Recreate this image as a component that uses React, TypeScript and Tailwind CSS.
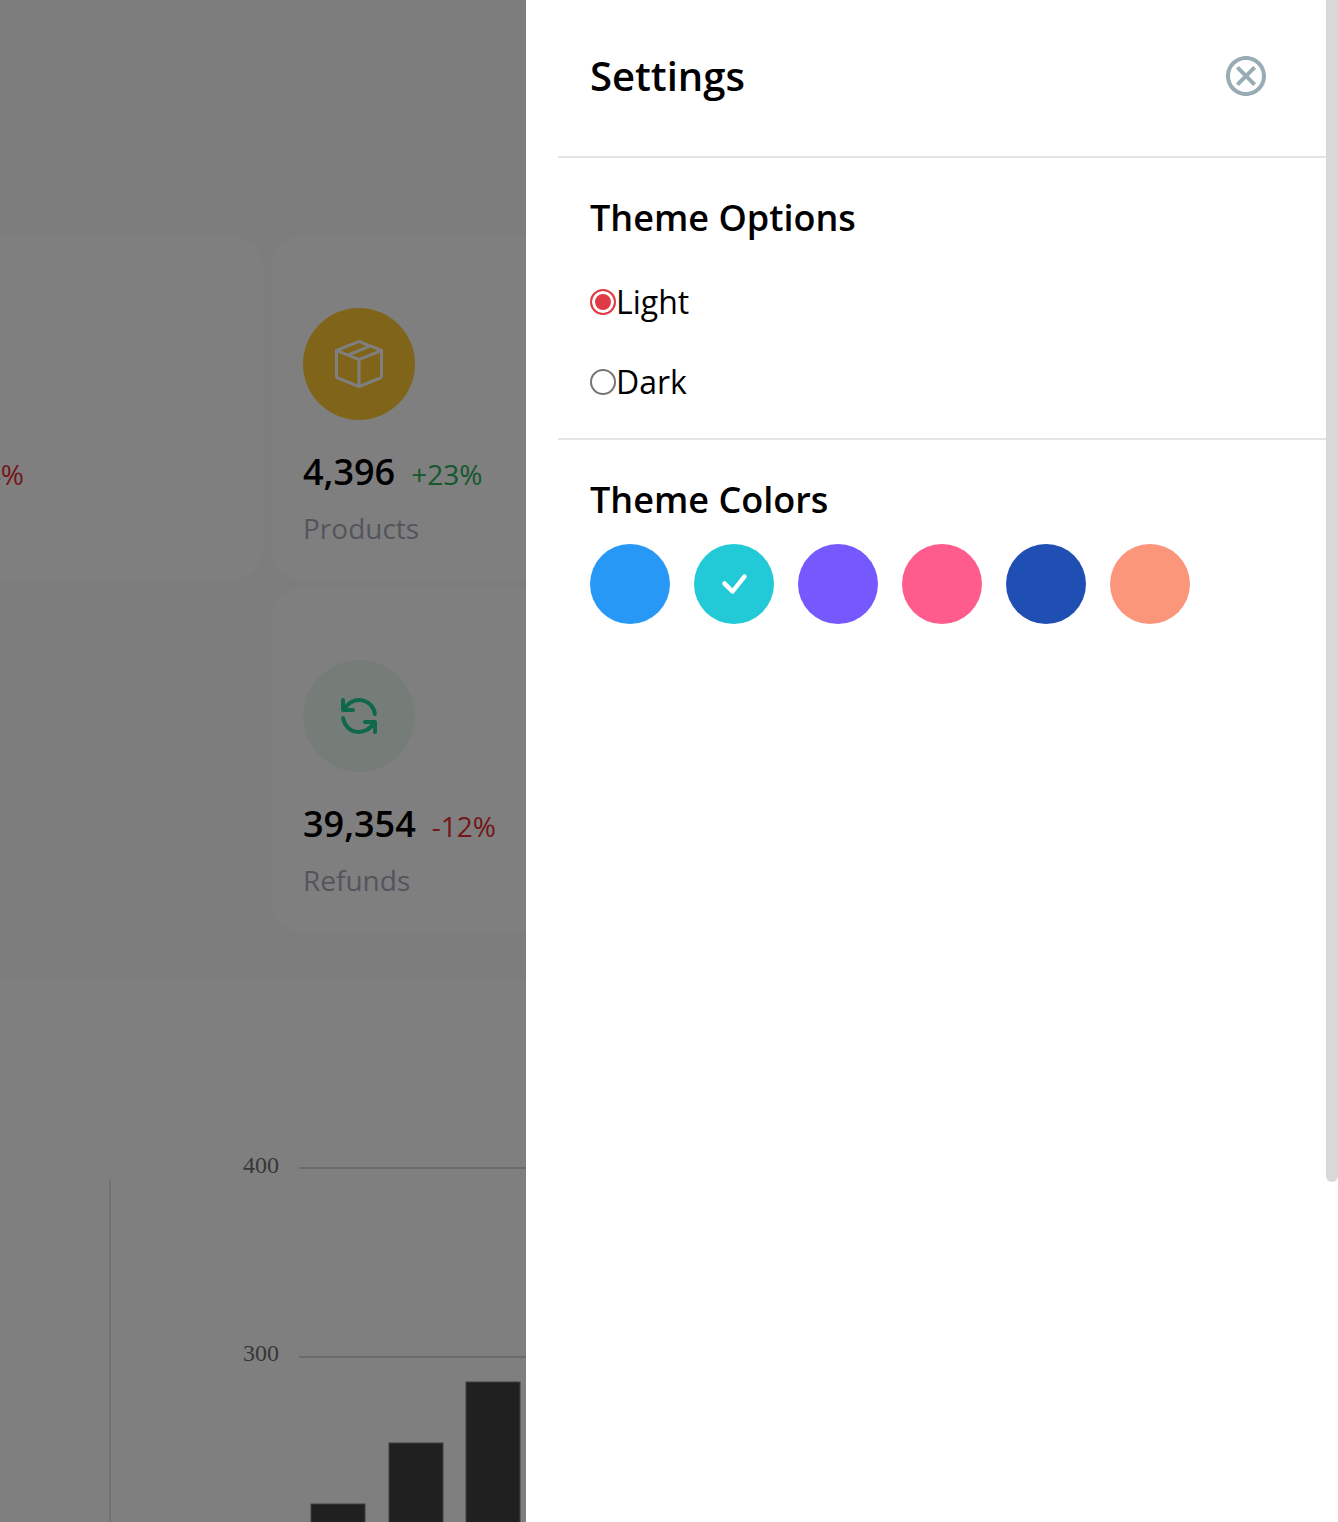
import { useState, type ReactNode } from "react";
import { BsBoxSeam, BsCheck } from "react-icons/bs";
import { HiOutlineRefresh } from "react-icons/hi";
import { MdOutlineCancel } from "react-icons/md";

const colors = [
  { name: "blue-theme", bg: "bg-[#2798f5]" },
  { name: "cyan-theme", bg: "bg-[#22cad8]" },
  { name: "purple-theme", bg: "bg-[#7559ff]" },
  { name: "pink-theme", bg: "bg-[#ff5c8e]" },
  { name: "indigo-theme", bg: "bg-[#1f4fb2]" },
  { name: "orange-theme", bg: "bg-[#fb967b]" },
];

const bars = [
  { x: 311, y: 364 },
  { x: 389, y: 303 },
  { x: 466, y: 242 },
];

type StatProps = {
  amount: string;
  change: string;
  title: string;
  changeClass: string;
  iconClass?: string;
  icon?: ReactNode;
  className?: string;
};

function Stat({ amount, change, title, changeClass, iconClass = "", icon, className = "" }: StatProps) {
  return (
    <article className={`rounded-[32px] bg-white px-8 pt-[72px] pb-8 ${className}`}>
      <div className={`flex size-28 items-center justify-center rounded-full ${iconClass}`}>{icon}</div>
      <p className="mt-6 flex items-baseline gap-4 leading-14">
        <span className="text-[36px] font-semibold text-black">{amount}</span>
        <span className={`text-[28px] ${changeClass}`}>{change}</span>
      </p>
      <p className="mt-[6px] text-[28px] leading-10 text-[#a8abb9]">{title}</p>
    </article>
  );
}

function Dashboard() {
  return (
    <main className="h-screen overflow-hidden bg-white">
      <section className="bg-[#fafafa] pt-[236px] pb-12">
        <div className="-ml-[185px] grid grid-cols-[448px_448px] gap-2">
          <Stat amount="39,354" change="-4%" title="Customers" changeClass="text-[#e43034]" />
          <Stat
            amount="4,396"
            change="+23%"
            title="Products"
            changeClass="text-[#28b056]"
            iconClass="bg-[#fec932] text-white"
            icon={<BsBoxSeam size={48} />}
          />
          <Stat
            className="col-start-2"
            amount="39,354"
            change="-12%"
            title="Refunds"
            changeClass="text-[#e43034]"
            iconClass="bg-[#ecfaf2] text-[#1ed096]"
            icon={<HiOutlineRefresh size={48} />}
          />
        </div>
      </section>
      <section className="flex pt-[160px]">
        <svg width="700" height="383" viewBox="0 0 700 383" role="img" aria-label="Revenue chart">
          <path d="M110 40V383" stroke="#e4e4e4" strokeWidth="2" />
          <path d="M299 28H700M299 217H700" stroke="#d6d6d6" strokeWidth="2" />
          <g fontFamily="Liberation Serif, serif" fontSize="24" fill="#6e6e6e" textAnchor="end">
            <text x="279" y="33">400</text>
            <text x="279" y="221">300</text>
          </g>
          {bars.map((b) => (
            <rect key={b.x} x={b.x} y={b.y} width="54" height="200" fill="#404040" stroke="#808080" />
          ))}
        </svg>
      </section>
    </main>
  );
}

export default function App() {
  const [mode, setMode] = useState("Light");
  const [color, setColor] = useState("cyan-theme");

  return (
    <div className="relative h-screen overflow-hidden font-['Open_Sans',sans-serif]">
      <Dashboard />
      <div className="absolute inset-0 flex justify-end bg-black/50">
        <aside className="flex h-full w-[812px] max-w-full bg-white text-black">
          <div className="ml-8 flex-1">
            <header className="flex items-center justify-between pt-8 pr-14 pb-9 pl-8">
              <h1 className="text-[40px] leading-[88px] font-semibold">Settings</h1>
              <button type="button" aria-label="Close settings" className="rounded-full text-[#99abb4]">
                <MdOutlineCancel size={48} />
              </button>
            </header>
            <section className="border-t-2 border-[#e5e5e5] px-8 pt-8 pb-8">
              <h2 className="text-[36px] leading-14 font-semibold">Theme Options</h2>
              {["Light", "Dark"].map((m) => (
                <label key={m} className="mt-8 flex h-12 items-center text-[32px]">
                  <input
                    type="radio"
                    name="theme"
                    value={m}
                    checked={mode === m}
                    onChange={() => setMode(m)}
                    className="size-[26px] appearance-none rounded-full border-2 border-[#767676] bg-white checked:border-[#e03a45] checked:bg-[#e03a45] checked:shadow-[inset_0_0_0_3px_white]"
                  />
                  {m}
                </label>
              ))}
            </section>
            <section className="border-t-2 border-[#e5e5e5] px-8 pt-8">
              <h2 className="text-[36px] leading-14 font-semibold">Theme Colors</h2>
              <div className="mt-4 flex gap-6">
                {colors.map((c) => (
                  <button
                    key={c.name}
                    type="button"
                    aria-label={c.name}
                    onClick={() => setColor(c.name)}
                    className={`flex size-20 items-center justify-center rounded-full text-white ${c.bg}`}
                  >
                    {color === c.name && <BsCheck size={48} />}
                  </button>
                ))}
              </div>
            </section>
          </div>
          <div className="h-[1182px] w-3 rounded-b-full bg-[#d8d8d8]" />
        </aside>
      </div>
    </div>
  );
}
